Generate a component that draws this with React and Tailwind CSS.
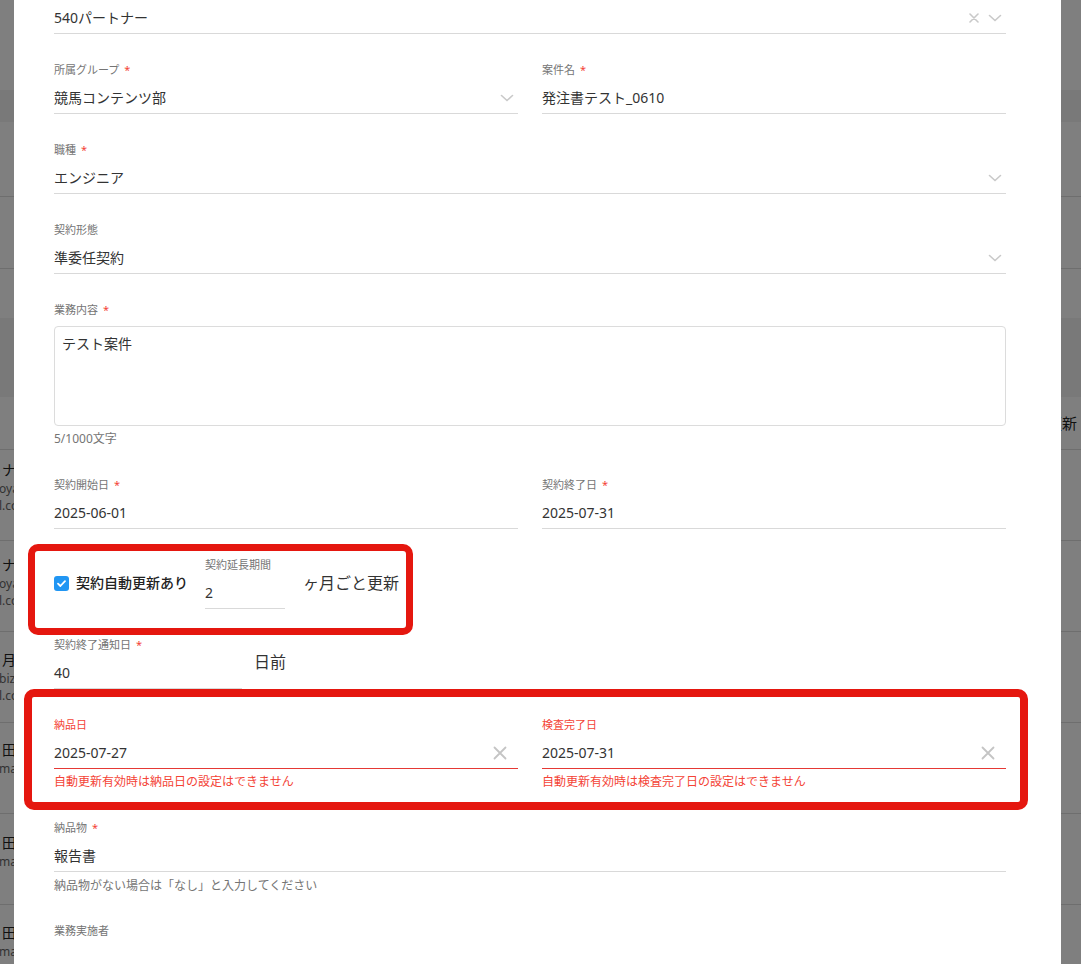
import React from "react";

const FONT = "font-['Noto_Sans','Noto_Sans_CJK_JP',sans-serif]";

const Chevron = () => (
  <svg width="14" height="8" viewBox="0 0 14 8" className="shrink-0">
    <path d="M1.5 1.5l5.5 5 5.5-5" stroke="#c9c9c9" strokeWidth="1.6" fill="none" strokeLinecap="round" />
  </svg>
);

const SmallX = () => (
  <svg width="10" height="10" viewBox="0 0 10 10" className="shrink-0">
    <path d="M1 1l8 8M9 1l-8 8" stroke="#c9c9c9" strokeWidth="1.6" strokeLinecap="round" />
  </svg>
);

const ClearX = () => (
  <svg width="14" height="14" viewBox="0 0 14 14" className="shrink-0">
    <path d="M1.5 1.5l11 11M12.5 1.5l-11 11" stroke="#c4c4c4" strokeWidth="1.8" strokeLinecap="round" />
  </svg>
);

const Req = () => <span className="ml-[5px] text-[11px] text-[#f44336]">*</span>;

// label + underlined input row (label 16 + 5 + row 31 = 52px)
function Field({ label, required, value, right, className = "", error }) {
  return (
    <div className={className}>
      <div className={`h-4 text-[11px] leading-4 ${error ? "text-[#f44336]" : "text-[#757575]"}`}>
        {label}
        {required && <Req />}
      </div>
      <div
        className={`mt-[5px] h-[31px] flex items-center border-b ${
          error ? "border-[#e53935]" : "border-[#d9d9d9]"
        }`}
      >
        <span className="flex-1 text-[14px] leading-5 text-[#333]">{value}</span>
        {right}
      </div>
      {error && <div className="mt-[5px] text-[12px] leading-4 text-[#f44336]">{error}</div>}
    </div>
  );
}

function BgRow({ pt, name, mails }) {
  return (
    <div className={`h-[91px] border-b border-[#dcdcdc] ${pt}`}>
      <div className="-ml-[40px] text-[14px] leading-5 text-[#222] whitespace-nowrap">テスト{name}</div>
      {mails.map((m) => (
        <div key={m} className="-ml-px text-[12px] leading-[17px] text-[#666] whitespace-nowrap">
          {m}
        </div>
      ))}
    </div>
  );
}

// page behind the dialog
function BackgroundPage() {
  return (
    <div className="flex flex-col">
      <div className="h-[90px]" />
      <div className="h-[32px] bg-[#f2f2f2]" />
      <div className="h-[75px] border-b border-[#dcdcdc]" />
      <div className="h-[72px] border-b border-[#dcdcdc]" />
      <div className="h-[49px]" />
      <div className="h-[79px] bg-[#f3f3f3]" />
      <div className="h-[53px] border-b border-[#dcdcdc] flex items-center justify-end pr-[4px] text-[15px] text-[#222]">
        最終更新
      </div>
      <BgRow pt="pt-[10px]" name="ナゴヤ" mails={["oyama-test", "l.com"]} />
      <BgRow pt="pt-[14px]" name="ナガノ" mails={["oyama-test", "l.com"]} />
      <BgRow pt="pt-[18px]" name="月岡" mails={["bizsample", "l.com"]} />
      <BgRow pt="pt-[17px]" name="田中" mails={["mail.com"]} />
      <BgRow pt="pt-[19px]" name="田中" mails={["mail.com"]} />
      <BgRow pt="pt-[18px]" name="田中" mails={["mail.com"]} />
    </div>
  );
}

export default function App() {
  return (
    <div className={`relative w-[1081px] h-[964px] overflow-hidden bg-white ${FONT}`}>
      <BackgroundPage />
      <div className="absolute inset-0 bg-black/50" />

      {/* dialog */}
      <div className="absolute left-[14px] top-0 w-[1047px] h-full bg-white pl-[40px] pr-[55px] flex flex-col">
        <Field
          className="-mt-[18px]"
          label="パートナー"
          required
          value="540パートナー"
          right={
            <div className="flex items-center gap-[9px] mr-[4px]">
              <SmallX />
              <Chevron />
            </div>
          }
        />

        <div className="mt-[28px] grid grid-cols-2 gap-6">
          <Field
            label="所属グループ"
            required
            value="競馬コンテンツ部"
            right={
              <div className="mr-[4px]">
                <Chevron />
              </div>
            }
          />
          <Field label="案件名" required value="発注書テスト_0610" />
        </div>

        <Field
          className="mt-[28px]"
          label="職種"
          required
          value="エンジニア"
          right={
            <div className="mr-[4px]">
              <Chevron />
            </div>
          }
        />

        <Field
          className="mt-[28px]"
          label="契約形態"
          value="準委任契約"
          right={
            <div className="mr-[4px]">
              <Chevron />
            </div>
          }
        />

        <div className="mt-[28px]">
          <div className="h-4 text-[11px] leading-4 text-[#757575]">
            業務内容
            <Req />
          </div>
          <div className="mt-2 h-[100px] rounded-[4px] border border-[#dcdcdc] pl-[7px] pt-[7px] text-[14px] leading-5 text-[#333]">
            テスト案件
          </div>
          <div className="mt-[5px] text-[12px] leading-4 text-[#757575]">5/1000文字</div>
        </div>

        <div className="mt-[30px] grid grid-cols-2 gap-6">
          <Field label="契約開始日" required value="2025-06-01" />
          <Field label="契約終了日" required value="2025-07-31" />
        </div>

        <div className="mt-[28px] flex items-center">
          <label className="self-start mt-[16px] flex items-center gap-[7px]">
            <span className="w-[15px] h-[15px] rounded-[3px] bg-[#2196f3] flex items-center justify-center">
              <svg width="11" height="11" viewBox="0 0 11 11">
                <path d="M2 5.6l2.4 2.4L9 3.2" stroke="#fff" strokeWidth="1.8" fill="none" strokeLinecap="round" strokeLinejoin="round" />
              </svg>
            </span>
            <span className="text-[14px] leading-5 font-medium text-[#222]">契約自動更新あり</span>
          </label>
          <Field className="ml-[17px] w-[80px]" label="契約延長期間" value="2" />
          <span className="ml-[18px] text-[16px] text-[#333]">ヶ月ごと更新</span>
        </div>

        <div className="mt-[28px] flex items-center">
          <Field className="w-[188px]" label="契約終了通知日" required value="40" />
          <span className="ml-[12px] mb-[2px] text-[16px] text-[#333]">日前</span>
        </div>

        <div className="mt-[28px] grid grid-cols-2 gap-6">
          <Field
            label="納品日"
            value="2025-07-27"
            error="自動更新有効時は納品日の設定はできません"
            right={
              <div className="mr-[11px]">
                <ClearX />
              </div>
            }
          />
          <Field
            label="検査完了日"
            value="2025-07-31"
            error="自動更新有効時は検査完了日の設定はできません"
            right={
              <div className="mr-[11px]">
                <ClearX />
              </div>
            }
          />
        </div>

        <div className="mt-[30px]">
          <Field label="納品物" required value="報告書" />
          <div className="mt-[6px] text-[12px] leading-4 text-[#757575]">
            納品物がない場合は「なし」と入力してください
          </div>
        </div>

        <div className="mt-[29px] h-4 text-[11px] leading-4 text-[#757575]">業務実施者</div>
      </div>

      {/* annotation frames */}
      <div className="absolute left-[28px] top-[544px] w-[385px] h-[91px] rounded-[10px] border-[7px] border-[#e5170f]" />
      <div className="absolute left-[24px] top-[689px] w-[1004px] h-[121px] rounded-[10px] border-[8px] border-[#e5170f]" />
    </div>
  );
}
